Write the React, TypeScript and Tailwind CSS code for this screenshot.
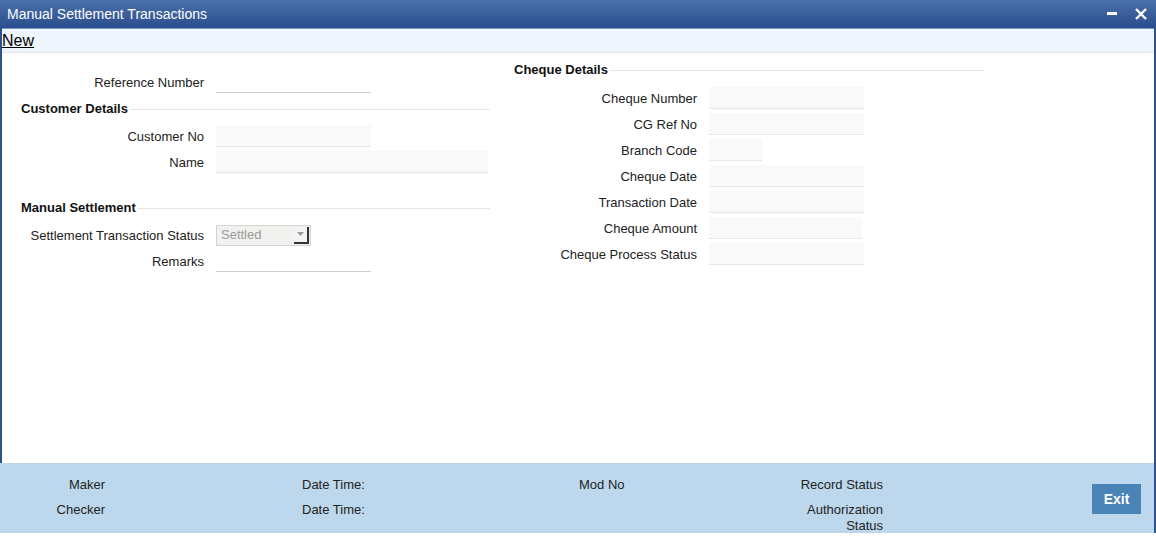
import React from "react";

const font = { fontFamily: '"Liberation Sans", Arial, sans-serif' };

const Field = ({ label, width, kind }: { label: string; width: string; kind: "line" | "box" }) => (
  <div className="flex h-[26px] items-center">
    <div className="w-[204px] text-right pt-px text-[13px] text-[#222]">{label}</div>
    <div
      className={`ml-[12px] h-[22px] ${width} ${
        kind === "box" ? "bg-[#f9f9f9] border-b border-[#e6e6e6]" : "border-b border-[#cfcfcf]"
      }`}
    />
  </div>
);

const RightField = ({ label, width }: { label: string; width: string }) => (
  <div className="flex h-[26px] items-center">
    <div className="w-[183px] text-right pt-px text-[13px] text-[#222]">{label}</div>
    <div className={`ml-[12px] h-[22px] bg-[#f9f9f9] border-b border-[#e6e6e6] ${width}`} />
  </div>
);

const Section = ({ title, lineWidth }: { title: string; lineWidth: string }) => (
  <div className={`flex h-[26px] items-center ${lineWidth}`}>
    <span className="text-[13px] font-bold text-[#111] whitespace-nowrap">{title}</span>
    <div className="flex-1 h-px bg-[#e6e6e6] ml-[2px]" />
  </div>
);

export default function App() {
  return (
    <div className="w-[1156px] h-[541px] bg-white overflow-hidden" style={font}>
      <div className="h-[533px] flex flex-col border-x-2 border-[#2d5291]">
        {/* title bar */}
        <div className="h-[28px] flex items-center bg-gradient-to-b from-[#4b70aa] to-[#2a4e8d] -mx-[2px]">
          <span className="ml-[7px] text-white text-[14px]">Manual Settlement Transactions</span>
          <div className="ml-auto flex items-center gap-[18px] mr-[9px]">
            <svg width="10" height="4" viewBox="0 0 10 4">
              <rect x="0" y="0" width="10" height="3" fill="#fff" />
            </svg>
            <svg width="12" height="12" viewBox="0 0 12 12">
              <path d="M1 1 L11 11 M11 1 L1 11" stroke="#fff" strokeWidth="2.4" />
            </svg>
          </div>
        </div>
        {/* toolbar */}
        <div className="h-[25px] flex items-center bg-[#eef5fd] border-t border-[#7a96c0] border-b border-b-[#e2e6ea]">
          <span className="text-[16px] text-black underline leading-none">New</span>
        </div>
        {/* body */}
        <div className="flex-1 flex">
          <div className="w-[490px] flex flex-col pt-[16px] -ml-[2px]">
            <Field label="Reference Number" width="w-[155px]" kind="line" />
            <div className="ml-[21px] mt-px">
              <Section title="Customer Details" lineWidth="w-[469px]" />
            </div>
            <div className="mt-px">
              <Field label="Customer No" width="w-[155px]" kind="box" />
            </div>
            <Field label="Name" width="w-[272px]" kind="box" />
            <div className="ml-[21px] mt-[20px]">
              <Section title="Manual Settlement" lineWidth="w-[469px]" />
            </div>
            <div className="mt-px flex h-[26px] items-center">
              <div className="w-[204px] text-right pt-px text-[13px] text-[#222]">Settlement Transaction Status</div>
              <div className="ml-[12px] w-[95px] h-[21px] bg-[#f1f1ef] border border-[#d4d4d0] flex items-center">
                <span className="ml-[4px] text-[13px] text-[#9a9a9a]">Settled</span>
                <div className="ml-auto mr-px w-[15px] h-[17px] bg-[#f3f3f3] border-r-2 border-b-2 border-[#333] flex items-center justify-center">
                  <svg width="7" height="4" viewBox="0 0 7 4">
                    <path d="M0 0 L7 0 L3.5 4 Z" fill="#9a9a9a" />
                  </svg>
                </div>
              </div>
            </div>
            <Field label="Remarks" width="w-[155px]" kind="line" />
          </div>
          <div className="ml-[24px] flex flex-col pt-[4px]">
            <Section title="Cheque Details" lineWidth="w-[470px]" />
            <div className="mt-[2px] flex flex-col">
              <RightField label="Cheque Number" width="w-[155px]" />
              <RightField label="CG Ref No" width="w-[155px]" />
              <RightField label="Branch Code" width="w-[53px]" />
              <RightField label="Cheque Date" width="w-[155px]" />
              <RightField label="Transaction Date" width="w-[155px]" />
              <RightField label="Cheque Amount" width="w-[153px]" />
              <RightField label="Cheque Process Status" width="w-[155px]" />
            </div>
          </div>
        </div>
        {/* footer */}
        <div className="h-[70px] bg-[#bdd8ec] flex items-start pt-[14px] text-[13px] text-[#222] leading-4 -ml-[2px]">
          <div className="w-[105px] flex flex-col gap-[9px] text-right">
            <span>Maker</span>
            <span>Checker</span>
          </div>
          <div className="ml-[197px] w-[277px] flex flex-col gap-[9px]">
            <span>Date Time:</span>
            <span>Date Time:</span>
          </div>
          <div className="w-[150px]">Mod No</div>
          <div className="w-[154px] flex flex-col gap-[9px] text-right">
            <span>Record Status</span>
            <span>
              Authorization
              <br />
              Status
            </span>
          </div>
          <button className="ml-auto mr-[13px] mt-[7px] w-[49px] h-[30px] bg-[#4a83b5] text-white text-[14px] font-semibold">
            Exit
          </button>
        </div>
      </div>
    </div>
  );
}
